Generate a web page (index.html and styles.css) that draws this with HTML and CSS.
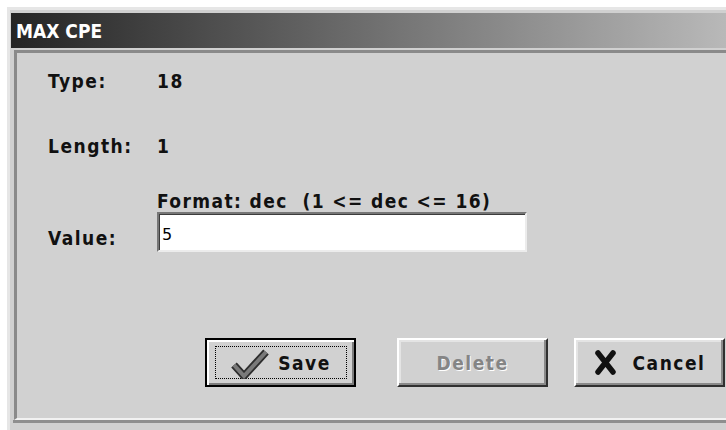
FILE: index.html
```html
<!DOCTYPE html>
<html lang="en">
<head>
<meta charset="utf-8">
<title>MAX CPE</title>
<link rel="stylesheet" href="styles.css">
</head>
<body>
<div class="window">
  <div class="titlebar"><span class="title">MAX CPE</span></div>
  <div class="panel">
    <div class="field-row row-type">
      <span class="label">Type:</span>
      <span class="value">18</span>
    </div>
    <div class="field-row row-length">
      <span class="label">Length:</span>
      <span class="value">1</span>
    </div>
    <div class="format">Format: dec&nbsp; (1 &lt;= dec &lt;= 16)</div>
    <div class="field-row row-value">
      <span class="label value-label">Value:</span>
      <input class="value-input" type="text" value="5">
    </div>
    <div class="button-row">
      <button class="btn btn-default btn-save" type="button">
        <span class="focus-rect">
          <svg class="icon-check" width="38" height="30" viewBox="0 0 38 30">
            <polyline points="3,16 13,27 35,3" fill="none" stroke="#2e2e2e" stroke-width="7.5" stroke-linejoin="miter" stroke-linecap="butt"/>
            <polyline points="3,16 13,27 35,3" fill="none" stroke="#7a7a7a" stroke-width="4" stroke-linejoin="miter" stroke-linecap="butt"/>
          </svg>
          <span>Save</span>
        </span>
      </button>
      <button class="btn btn-disabled btn-delete" type="button">Delete</button>
      <button class="btn btn-cancel" type="button">
        <svg class="icon-x" width="23" height="25" viewBox="0 0 23 25">
          <path d="M4 3 L19 22 M19 3 L4 22" fill="none" stroke="#111" stroke-width="5.5" stroke-linecap="round"/>
        </svg>
        <span>Cancel</span>
      </button>
    </div>
  </div>
  <div class="status"></div>
</div>
</body>
</html>
```

FILE: styles.css
```css
html, body {
  margin: 0;
  padding: 0;
  background: #ffffff;
  overflow: hidden;
}

.window {
  width: 740px;
  height: 440px;
  margin: 7px 0 0 7px;
  border-top: 3px solid #e6e6e6;
  border-left: 3px solid #e6e6e6;
  padding: 3px 0 0 1px;
  background: #d0d0d0;
  box-sizing: border-box;
  font-family: "DejaVu Sans Condensed", "DejaVu Sans", sans-serif;
  font-stretch: condensed;
  color: #111;
}

.titlebar {
  height: 35px;
  display: flex;
  align-items: center;
  padding-left: 5px;
  background: linear-gradient(to right, #242424 0%, #bdbdbd 100%);
}

.title {
  font-family: "Liberation Sans Narrow", "DejaVu Sans Condensed", sans-serif;
  font-stretch: condensed;
  font-weight: bold;
  font-size: 19px;
  color: #ffffff;
}

.panel {
  margin: 2px 0 0 3px;
  height: 370px;
  box-sizing: border-box;
  border-top: 3px solid #8a8a8a;
  border-left: 3px solid #8a8a8a;
  border-bottom: 2px solid #f2f2f2;
  background: #d1d1d1;
  padding: 18px 0 0 31px;
  display: flex;
  flex-direction: column;
  font-weight: bold;
  font-size: 19px;
  letter-spacing: 1.5px;
  line-height: 20px;
}

.field-row {
  display: flex;
  align-items: flex-start;
}

.label {
  width: 109px;
  flex: none;
}

.row-length {
  margin-top: 45px;
}

.format {
  margin: 35px 0 0 109px;
  letter-spacing: 1.4px;
}

.value-label {
  margin-top: 17px;
}

.value-input {
  width: 370px;
  height: 40px;
  box-sizing: border-box;
  margin: 1px 0 0;
  padding: 4px 3px 0;
  border: 2px solid;
  border-color: #767676 #ececec #ececec #767676;
  box-shadow: inset 1px 1px 0 #3c3c3c;
  background: #ffffff;
  font-family: "DejaVu Sans", sans-serif;
  font-weight: normal;
  font-size: 16px;
  letter-spacing: 0;
  color: #000;
  outline: none;
}

.button-row {
  display: flex;
  margin: 86px 0 0 157px;
}

.btn {
  width: 151px;
  height: 49px;
  box-sizing: border-box;
  margin: 0;
  padding: 0;
  display: flex;
  align-items: center;
  justify-content: center;
  background: #d1d1d1;
  border: 2px solid;
  border-color: #ffffff #303030 #303030 #ffffff;
  box-shadow: inset -2px -2px 0 #8a8a8a, inset 2px 2px 0 #e4e4e4;
  font-family: "DejaVu Sans Condensed", "DejaVu Sans", sans-serif;
  font-stretch: condensed;
  font-weight: bold;
  font-size: 19px;
  letter-spacing: 1.5px;
  color: #111;
}

.btn-default {
  border: 2px solid #000;
  box-shadow: inset 2px 2px 0 #ffffff, inset -2px -2px 0 #7c7c7c;
  padding: 6px 7px 6px 8px;
}

.focus-rect {
  flex: 1;
  align-self: stretch;
  display: flex;
  align-items: center;
  justify-content: center;
  gap: 9px;
  border: 1px dotted #000;
}

.icon-check {
  display: block;
  margin-top: 2px;
}

.btn-delete {
  margin-left: 41px;
  color: #858585;
  text-shadow: 1px 1px 0 #ffffff;
}

.btn-cancel {
  margin-left: 26px;
  gap: 16px;
}

.icon-x {
  display: block;
}

.status {
  margin-left: 2px;
  border-top: 3px solid #8e8e8e;
  height: 20px;
}
```
